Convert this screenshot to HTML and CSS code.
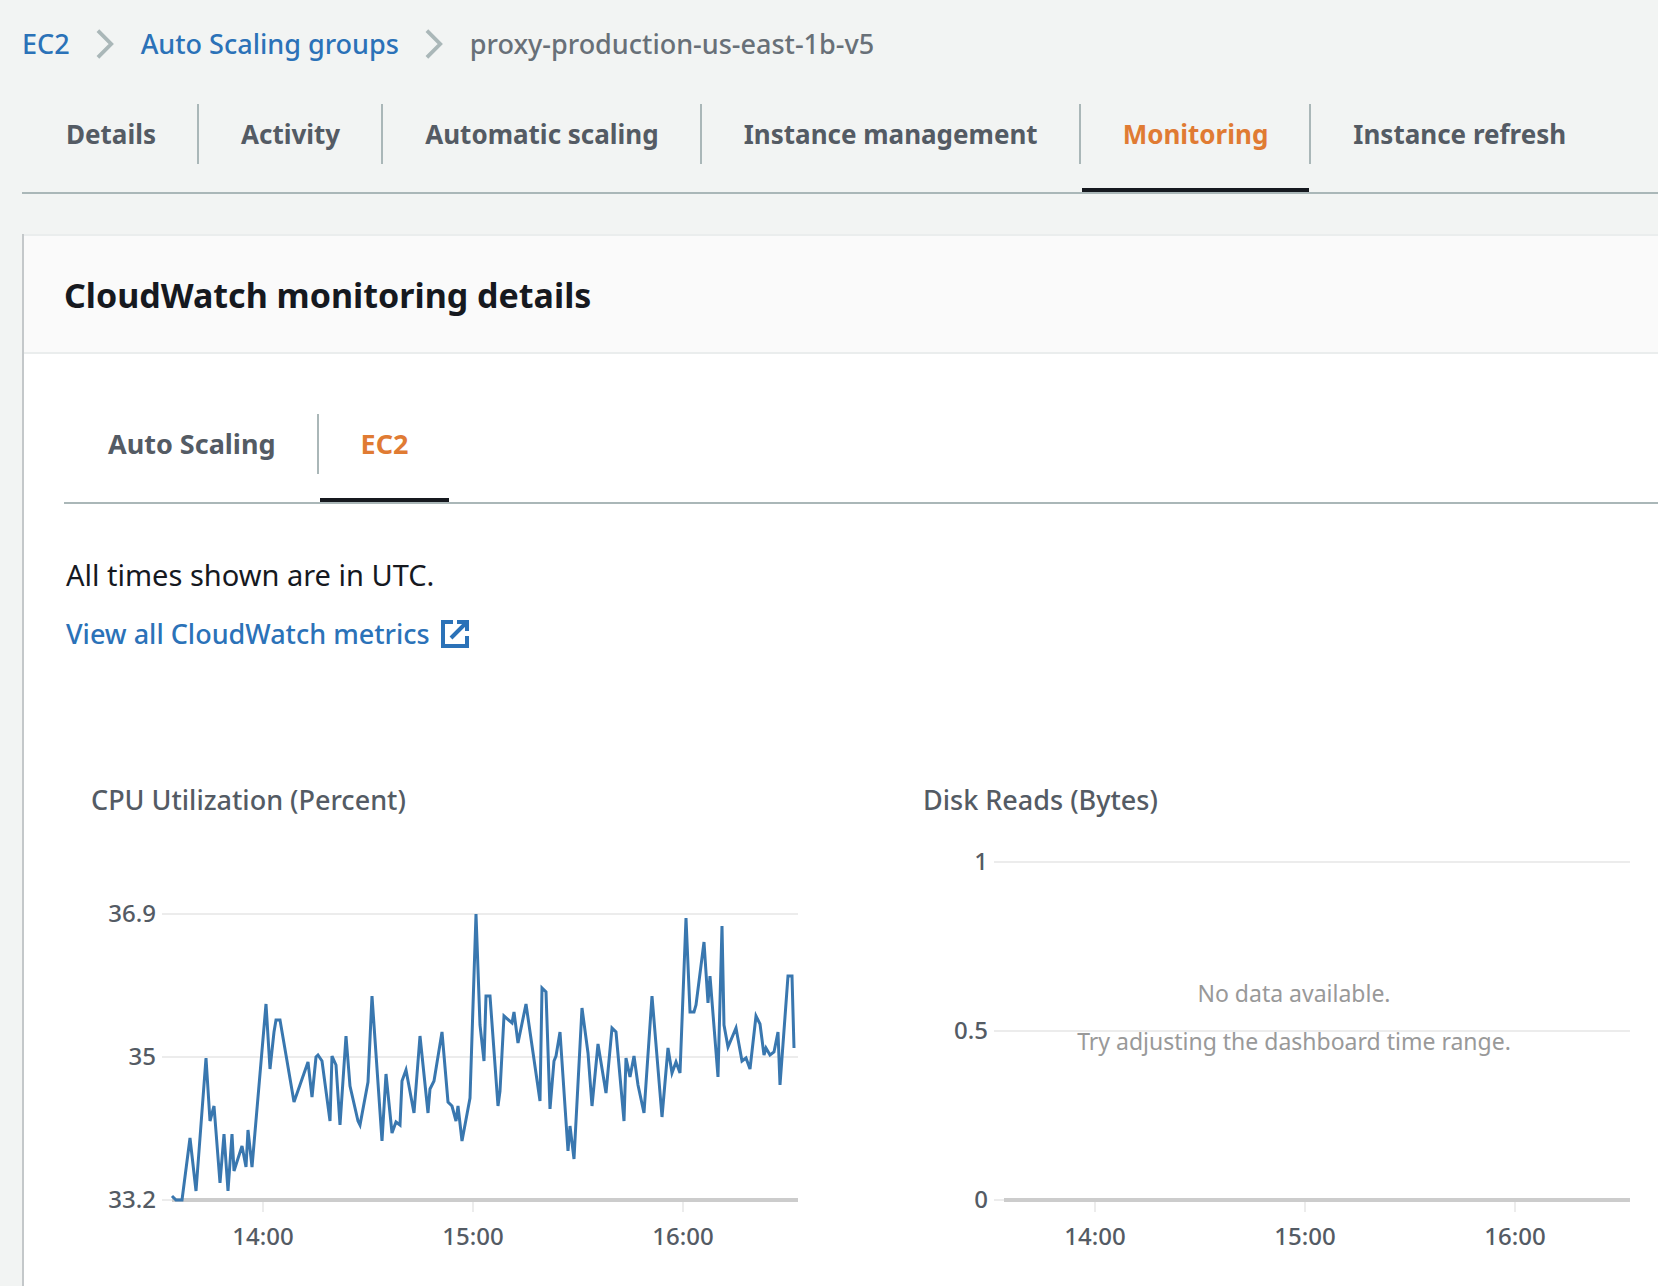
FILE: index.html
```html
<!DOCTYPE html>
<html lang="en">
<head>
<meta charset="utf-8">
<title>Auto Scaling groups | EC2</title>
<link rel="stylesheet" href="styles.css">
</head>
<body>
<nav class="breadcrumb" aria-label="Breadcrumb">
  <a href="#ec2">EC2</a>
  <svg class="chevron" viewBox="0 0 20 32" aria-hidden="true"><path d="M2 2 16 16 2 30"/></svg>
  <a href="#groups">Auto Scaling groups</a>
  <svg class="chevron" viewBox="0 0 20 32" aria-hidden="true"><path d="M2 2 16 16 2 30"/></svg>
  <span>proxy-production-us-east-1b-v5</span>
</nav>
<div class="tabs" role="tablist">
  <button class="tab" role="tab" type="button">Details</button>
  <button class="tab" role="tab" type="button">Activity</button>
  <button class="tab" role="tab" type="button">Automatic scaling</button>
  <button class="tab" role="tab" type="button">Instance management</button>
  <button class="tab active" role="tab" type="button" aria-selected="true">Monitoring</button>
  <button class="tab" role="tab" type="button">Instance refresh</button>
</div>
<main class="card">
  <header class="card-header"><h2>CloudWatch monitoring details</h2></header>
  <div class="card-body">
    <div class="tabs" role="tablist">
      <button class="tab" role="tab" type="button">Auto Scaling</button>
      <button class="tab active" role="tab" type="button" aria-selected="true">EC2</button>
    </div>
    <div class="intro">
      <p>All times shown are in UTC.</p>
      <a class="external" href="#metrics">View all CloudWatch metrics
        <svg class="external-icon" viewBox="0 0 30 30" aria-hidden="true"><path d="M13 3H3V27H27V17M17 3H27V12M26 4 11 19"/></svg>
      </a>
    </div>
    <div class="charts">
      <section class="chart">
        <h3>CPU Utilization (Percent)</h3>
        <svg class="plot" viewBox="91 840 708 420" role="img" aria-label="CPU utilization over time">
          <path class="grid" d="M162 914H798M162 1057H798M162 1200H172M263 1202V1212M473 1202V1212M683 1202V1212"/>
          <path class="axis" d="M172 1200H798"/>
          <g class="y-labels"><text x="156" y="922">36.9</text><text x="156" y="1065">35</text><text x="156" y="1208">33.2</text></g>
          <g class="x-labels"><text x="263" y="1245">14:00</text><text x="473" y="1245">15:00</text><text x="683" y="1245">16:00</text></g>
          <polyline class="series" points="172,1196 176,1200 182,1200 190,1138 196,1191 206,1058 210,1121 214,1106 220,1183 224,1134 228,1191 232,1134 234,1171 242,1146 246,1167 248,1130 252,1167 266,1004 270,1069 274,1032 276,1020 280,1020 286,1055 294,1102 308,1062 312,1097 316,1057 318,1055 322,1061 330,1121 332,1056 336,1065 340,1125 346,1036 350,1086 358,1121 360,1125 368,1082 372,996 382,1141 386,1074 392,1133 396,1122 400,1125 402,1081 406,1070 414,1113 420,1036 428,1113 430,1089 434,1081 442,1032 448,1102 452,1106 456,1121 458,1106 462,1141 470,1098 476,914 480,1025 484,1061 486,996 490,996 498,1106 500,1091 504,1016 512,1023 514,1012 518,1043 526,1004 540,1101 542,988 546,992 550,1109 554,1061 556,1056 560,1032 568,1151 570,1126 574,1159 582,1008 588,1053 592,1106 598,1044 606,1093 612,1028 616,1032 624,1121 626,1058 630,1077 634,1056 638,1085 644,1113 652,996 662,1117 668,1048 672,1073 676,1062 680,1073 686,918 690,1012 694,1012 696,1005 704,942 708,1003 710,976 718,1077 722,926 724,1025 728,1047 736,1028 742,1061 746,1058 750,1069 756,1016 760,1024 764,1055 766,1048 770,1055 774,1052 778,1032 780,1085 788,976 792,976 794,1048"/>
        </svg>
      </section>
      <section class="chart">
        <h3>Disk Reads (Bytes)</h3>
        <svg class="plot" viewBox="91 840 708 420" role="img" aria-label="Disk reads over time">
          <path class="grid" d="M162 862H798M162 1031H798M162 1200H172M263 1202V1212M473 1202V1212M683 1202V1212"/>
          <path class="axis" d="M172 1200H798"/>
          <g class="y-labels"><text x="156" y="870">1</text><text x="156" y="1039">0.5</text><text x="156" y="1208">0</text></g>
          <g class="x-labels"><text x="263" y="1245">14:00</text><text x="473" y="1245">15:00</text><text x="683" y="1245">16:00</text></g>
          <g class="empty"><text x="462" y="1002">No data available.</text><text x="462" y="1050">Try adjusting the dashboard time range.</text></g>
        </svg>
      </section>
    </div>
  </div>
</main>
</body>
</html>
```
FILE: styles.css
```css
* { box-sizing: border-box; }
body {
  margin: 0;
  min-height: 100vh;
  display: flex;
  flex-direction: column;
  padding-left: 22px;
  background: #f2f4f3;
  color: #16191f;
  font: 500 27px/36px "Noto Sans", "Open Sans", sans-serif;
}
a { color: #2b72b8; text-decoration: none; }
h2, h3, p { margin: 0; }

.breadcrumb { display: flex; align-items: center; gap: 26px; padding: 26px 0; color: #687078; white-space: nowrap; }
.chevron { width: 19px; height: 32px; fill: none; stroke: #aab7b8; stroke-width: 4; }

.tabs { display: flex; border-bottom: 2px solid #aab7b8; }
.tab {
  position: relative;
  height: 104px;
  padding: 0 41px 12px 44px;
  border: 0;
  background: none;
  color: #545b64;
  font: inherit;
  font-size: 26px;
  font-weight: 700;
  white-space: nowrap;
}
.card .tab { font-size: 27px; }
.tab + .tab::before { content: ""; position: absolute; left: 0; top: 16px; width: 2px; height: 60px; background: #aab7b8; }
.tab.active { color: #e07b33; }
.tab.active::after { content: ""; position: absolute; left: 3px; right: 0; bottom: 0; height: 4px; background: #16191f; }

.card { flex: 1; margin-top: 40px; border-left: 2px solid #c4c8ca; background: #fff; }
.card-header { padding: 39px 40px 37px; border: solid #eaeded; border-width: 2px 0; background: #fafafa; }
.card-header h2 { font-size: 34px; line-height: 40px; }
.card-body { padding: 44px 0 0 40px; }
.intro { display: flex; flex-direction: column; align-items: flex-start; gap: 23px; padding: 53px 2px 0; }
.intro p { font-size: 29px; font-weight: 400; }
.external { display: inline-flex; align-items: center; gap: 10px; }
.external-icon { width: 30px; height: 30px; fill: none; stroke: currentColor; stroke-width: 4; }

.charts { display: grid; grid-template-columns: 1fr 1fr; gap: 124px; padding: 130px 27px 0 27px; }
.chart h3 { margin-bottom: 22px; color: #545b64; font-size: 27px; font-weight: 500; }
.plot { display: block; width: 100%; font-size: 24px; }
.grid { fill: none; stroke: #ececec; stroke-width: 2; }
.axis { stroke: #ccc; stroke-width: 4; }
.series { fill: none; stroke: #3977af; stroke-width: 3; }
.y-labels { fill: #545b64; text-anchor: end; }
.x-labels { fill: #545b64; text-anchor: middle; }
.empty { fill: #999; font-size: 23px; font-weight: 400; text-anchor: middle; }
```
